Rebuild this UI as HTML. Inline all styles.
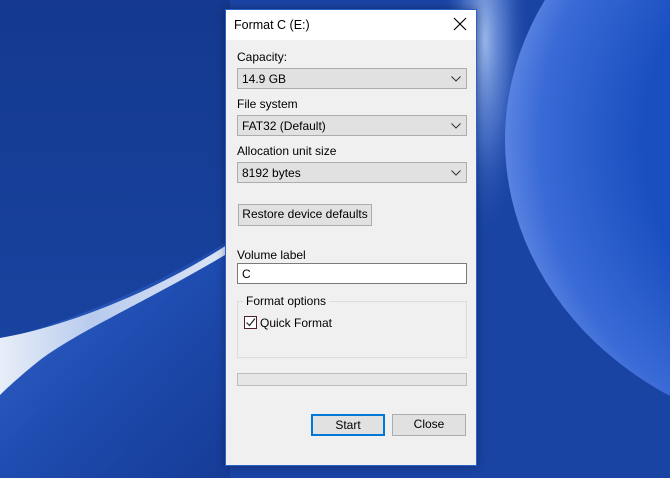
<!DOCTYPE html>
<html><head><style>
*{margin:0;padding:0;box-sizing:border-box}
body{width:670px;height:478px;overflow:hidden;position:relative;font-family:"Liberation Sans",sans-serif;font-size:12px;color:#000;background:#1a44a4}
.bg{position:absolute;left:0;top:0}
.dlg{position:absolute;left:225px;top:9px;width:252px;height:457px;background:#f0f0f0;border:1px solid #2b63c8;box-shadow:0 0 8px rgba(0,0,0,.35)}
.title{height:30px;background:#fff;position:relative}
.title span{position:absolute;left:8px;top:8px;font-size:12.5px}
.x{position:absolute;right:9px;top:7px}
.a{position:absolute}
.lbl{position:absolute;left:11px;font-size:12px}
.combo{position:absolute;left:11px;width:230px;height:21px;background:#e1e1e1;border:1px solid #adadad}
.combo span{position:absolute;left:4px;top:3px}
.combo svg{position:absolute;right:5px;top:7px}
.btn{position:absolute;background:#e1e1e1;border:1px solid #adadad;text-align:center;line-height:19px}
</style></head><body>
<svg class="bg" width="670" height="478">
<defs>
<linearGradient id="top" x1="0" y1="0" x2="0" y2="1"><stop offset="0" stop-color="#14398f"/><stop offset="1" stop-color="#1a47a6"/></linearGradient>
<linearGradient id="low" x1="0" y1="0" x2="1" y2="1"><stop offset="0" stop-color="#3766cc"/><stop offset=".5" stop-color="#1e4cb0"/><stop offset="1" stop-color="#163b96"/></linearGradient>
<linearGradient id="sw" x1="0" y1="0" x2="1" y2="0"><stop offset="0" stop-color="#e8eef8"/><stop offset=".4" stop-color="#b8cbee"/><stop offset="1" stop-color="#dde6f6"/></linearGradient>
<radialGradient id="circ" cx="850" cy="140" r="345" gradientUnits="userSpaceOnUse"><stop offset=".6" stop-color="#1a4fc0"/><stop offset=".9" stop-color="#3a6ad6"/><stop offset="1" stop-color="#5a84e2"/></radialGradient>
<radialGradient id="rt" cx="485" cy="40" r="1" gradientTransform="translate(485 40) scale(45 200) translate(-485 -40)" gradientUnits="userSpaceOnUse"><stop offset="0" stop-color="#9ab6ea"/><stop offset=".5" stop-color="#5d84d6" stop-opacity=".6"/><stop offset="1" stop-color="#1a44a4" stop-opacity="0"/></radialGradient>
</defs>
<rect width="670" height="478" fill="#1a44a4"/>
<rect x="0" y="0" width="230" height="478" fill="url(#top)"/>
<path d="M0 340 C60 325 150 290 230 240 L230 478 L0 478Z" fill="url(#low)"/>
<path d="M0 338 C60 328 150 295 230 243 L230 252 C150 300 80 330 40 360 C25 372 10 385 0 395Z" fill="url(#sw)"/>
<rect x="440" y="0" width="100" height="260" fill="url(#rt)"/>
<ellipse cx="850" cy="140" rx="345" ry="300" fill="url(#circ)"/>
</svg>
<div class="dlg">
<div class="title"><span>Format C (E:)</span>
<svg class="x" width="14" height="14"><path d="M1 1L13 13M13 1L1 13" stroke="#000" stroke-width="1.2"/></svg></div>
<div class="lbl" style="top:40px">Capacity:</div>
<div class="combo" style="top:58px"><span>14.9 GB</span><svg width="10" height="6"><path d="M0.5 0.5L5 5L9.5 0.5" fill="none" stroke="#333"/></svg></div>
<div class="lbl" style="top:87px">File system</div>
<div class="combo" style="top:105px"><span>FAT32 (Default)</span><svg width="10" height="6"><path d="M0.5 0.5L5 5L9.5 0.5" fill="none" stroke="#333"/></svg></div>
<div class="lbl" style="top:134px">Allocation unit size</div>
<div class="combo" style="top:152px"><span>8192 bytes</span><svg width="10" height="6"><path d="M0.5 0.5L5 5L9.5 0.5" fill="none" stroke="#333"/></svg></div>
<div class="btn" style="left:12px;top:194px;width:134px;height:22px">Restore device defaults</div>
<div class="lbl" style="top:238px">Volume label</div>
<div class="a" style="left:11px;top:253px;width:230px;height:21px;background:#fff;border:1px solid #7a7a7a"><span style="position:absolute;left:4px;top:3px">C</span></div>
<div class="a" style="left:11px;top:291px;width:230px;height:57px;border:1px solid #dcdcdc"></div>
<div class="a" style="left:17px;top:284px;background:#f0f0f0;padding:0 3px">Format options</div>
<div class="a" style="left:18px;top:306px;width:13px;height:13px;border:1px solid #4a2030;background:#fff"><svg width="11" height="11" style="position:absolute;left:0;top:0"><path d="M1.5 5.5L4.5 8.5L10 1.5" fill="none" stroke="#222" stroke-width="1.2"/></svg></div>
<div class="a" style="left:34px;top:306px">Quick Format</div>
<div class="a" style="left:11px;top:363px;width:230px;height:13px;background:#e6e6e6;border:1px solid #bcbcbc"></div>
<div class="btn" style="left:85px;top:404px;width:74px;height:22px;border:2px solid #0078d7;line-height:18px">Start</div>
<div class="btn" style="left:166px;top:404px;width:74px;height:22px">Close</div>
</div>
</body></html>
